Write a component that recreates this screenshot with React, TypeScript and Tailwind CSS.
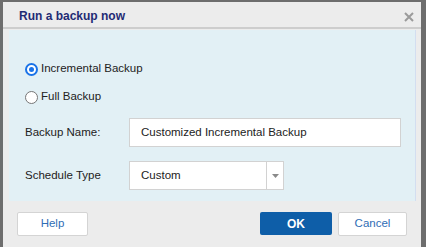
import { useState } from "react";

const FONT = "font-['Liberation_Sans',Arial,sans-serif]";

function Radio({ checked, label, onClick }: { checked: boolean; label: string; onClick: () => void }) {
  return (
    <label className="flex items-center h-[20px] cursor-pointer" onClick={onClick}>
      <span
        className={
          checked
            ? "w-[13px] h-[13px] rounded-full border-2 border-[#1a73e8] bg-white flex items-center justify-center"
            : "w-[13px] h-[13px] rounded-full border border-[#767676] bg-white"
        }
      >
        {checked && <span className="w-[5px] h-[5px] rounded-full bg-[#1a73e8]" />}
      </span>
      <span className="ml-[3px] text-[11.5px] text-[#222]">{label}</span>
    </label>
  );
}

export default function App() {
  const [type, setType] = useState("incremental");

  return (
    <div className={`w-[426px] h-[247px] bg-[#6d6d6d] pt-[2px] pl-[3px] pr-[5px] overflow-hidden ${FONT}`}>
      <div className="h-full bg-[#ececec] flex flex-col">
        {/* header */}
        <div className="h-[27px] flex items-center justify-between pl-[16px] pr-[7px] border-b-2 border-[#cdcdcd] shrink-0">
          <span className="text-[12px] font-bold text-[#1f2b74] pt-[2px]">Run a backup now</span>
          <svg width="10" height="10" viewBox="0 0 10 10" className="mt-[4px]">
            <path d="M1 1L9 9M9 1L1 9" stroke="#9a9a9a" strokeWidth="2" />
          </svg>
        </div>

        {/* body */}
        <div className="ml-[6px] mr-[5px] mt-[1px] h-[171px] bg-[#e2f0f5] border-r border-[#d3def0] pl-[16px] pt-[29px]">
          <Radio checked={type === "incremental"} label="Incremental Backup" onClick={() => setType("incremental")} />
          <div className="mt-[8px]">
            <Radio checked={type === "full"} label="Full Backup" onClick={() => setType("full")} />
          </div>

          <div className="flex items-center mt-[11px]">
            <span className="w-[104px] text-[11.5px] text-[#222]">Backup Name:</span>
            <div className="w-[272px] h-[29px] bg-white border border-[#d2d2d2] flex items-center pl-[11px] text-[11.5px] text-[#222]">
              Customized Incremental Backup
            </div>
          </div>

          <div className="flex items-center mt-[14px]">
            <span className="w-[104px] text-[11.5px] text-[#222]">Schedule Type</span>
            <div className="flex h-[29px]">
              <div className="w-[138px] bg-white border border-[#d2d2d2] flex items-center pl-[11px] text-[11.5px] text-[#222]">
                Custom
              </div>
              <div className="w-[17px] bg-white border border-l-0 border-[#d2d2d2] flex items-center justify-center">
                <svg width="7" height="4" viewBox="0 0 7 4">
                  <path d="M0 0H7L3.5 4Z" fill="#8a8a8a" />
                </svg>
              </div>
            </div>
          </div>
        </div>

        {/* footer */}
        <div className="flex items-center justify-between px-[14px] pt-[11px]">
          <button className="w-[71px] h-[24px] bg-white border border-[#d4d4d4] rounded-[2px] text-[11.5px] text-[#2f6db5]">
            Help
          </button>
          <div className="flex gap-[6px]">
            <button className="w-[72px] h-[23px] bg-[#0e5ea8] rounded-[2px] text-[12px] font-bold text-white">
              OK
            </button>
            <button className="w-[69px] h-[24px] bg-white border border-[#d4d4d4] rounded-[2px] text-[11.5px] text-[#2f6db5]">
              Cancel
            </button>
          </div>
        </div>
      </div>
    </div>
  );
}
